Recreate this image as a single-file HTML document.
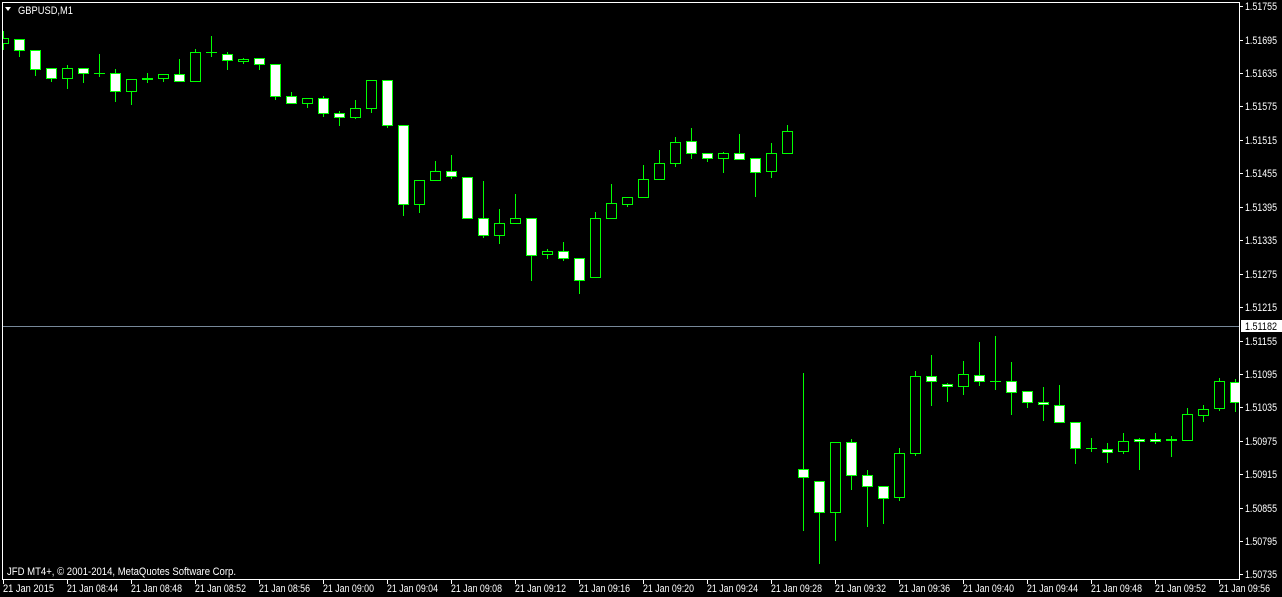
<!DOCTYPE html>
<html><head><meta charset="utf-8"><style>
html,body{margin:0;padding:0;background:#000;overflow:hidden}
svg{display:block}
text{font-family:"Liberation Sans",sans-serif;font-size:11px;fill:#fff}
.w{fill:#fff;stroke:#0f0}
.b{fill:#000;stroke:#0f0}
</style></head><body>
<svg width="1282" height="597" viewBox="0 0 1282 597" xmlns="http://www.w3.org/2000/svg">
<defs><clipPath id="c"><rect x="3" y="3" width="1236" height="576"/></clipPath></defs>
<rect width="1282" height="597" fill="#000"/>
<path d="M2.5 2.5H1239.5V579.5H2.5Z" fill="none" stroke="#fff"/>
<path d="M3 326.5H1239" stroke="#778899"/>
<g clip-path="url(#c)" stroke-width="1" id="g"></g>
<polygon points="5,7 11,7 8,11" fill="#fff"/>
<text x="18" y="14" textLength="55" lengthAdjust="spacingAndGlyphs">GBPUSD,M1</text>
<text x="7" y="575" textLength="229" lengthAdjust="spacingAndGlyphs">JFD MT4+, © 2001-2014, MetaQuotes Software Corp.</text>
<g id="ax"></g>
<rect x="1241" y="320" width="41" height="12" fill="#fff"/>
<text x="1245" y="330" textLength="32" lengthAdjust="spacingAndGlyphs" style="fill:#000">1.51182</text>
</svg>
<script>
var C=[[3,38,43,31,49,'b'],[19,39,50,39,56,'w'],[35,50,69,50,75,'w'],[51,68,78,68,81,'w'],[67,68,78,65,88,'b'],[83,68,73,68,82,'w'],[99,73,73,54,76,'d'],[115,73,91,69,101,'w'],[131,79,91,79,104,'b'],[147,78,79,73,82,'w'],[163,74,78,74,81,'b'],[179,74,81,59,81,'w'],[195,52,81,49,81,'b'],[211,52,52,36,56,'d'],[227,54,60,52,69,'w'],[243,59,61,58,63,'b'],[259,58,64,58,69,'w'],[275,64,96,64,99,'w'],[291,96,103,92,103,'w'],[307,98,103,98,107,'b'],[323,98,113,96,116,'w'],[339,113,117,111,125,'w'],[355,108,117,100,118,'b'],[371,80,108,80,112,'b'],[387,80,125,80,127,'w'],[403,125,204,125,215,'w'],[419,180,204,180,212,'b'],[435,171,180,161,180,'b'],[451,171,176,155,178,'w'],[467,177,218,177,218,'w'],[483,218,235,181,237,'w'],[499,223,235,209,243,'b'],[515,218,223,194,223,'b'],[531,218,255,218,280,'w'],[547,251,254,249,258,'b'],[563,251,258,242,260,'w'],[579,258,280,258,293,'w'],[595,218,277,212,277,'b'],[611,203,218,184,218,'b'],[627,197,204,197,206,'b'],[643,179,197,165,197,'b'],[659,163,179,150,179,'b'],[675,142,163,137,166,'b'],[691,141,153,128,158,'w'],[707,153,158,153,161,'w'],[723,153,158,152,172,'b'],[739,153,159,134,159,'w'],[755,158,172,158,196,'w'],[771,153,171,143,177,'b'],[787,131,153,125,153,'b'],[803,469,477,373,530,'w'],[819,481,512,481,563,'w'],[835,442,512,442,540,'b'],[851,442,475,439,489,'w'],[867,475,486,470,526,'w'],[883,486,498,486,523,'w'],[899,453,497,448,500,'b'],[915,376,453,371,455,'b'],[931,376,381,355,405,'w'],[947,384,386,383,401,'w'],[963,374,386,361,394,'b'],[979,375,381,342,385,'w'],[995,381,381,336,389,'d'],[1011,381,392,362,414,'w'],[1027,391,402,391,407,'w'],[1043,402,404,387,420,'w'],[1059,405,422,385,422,'w'],[1075,422,448,422,463,'w'],[1091,448,448,438,451,'d'],[1107,449,452,443,462,'w'],[1123,441,451,433,453,'b'],[1139,439,441,438,469,'w'],[1155,439,441,433,443,'w'],[1171,439,440,436,456,'w'],[1187,414,440,408,440,'b'],[1203,409,415,405,421,'b'],[1219,381,408,378,410,'b'],[1235,382,402,379,411,'w']];
var s='';
C.forEach(function(c){var x=c[0];
s+='<path d="M'+(x+.5)+' '+c[3]+'V'+(c[4]+1)+'" stroke="#0f0"/>';
if(c[5]=='d')s+='<path d="M'+(x-5)+' '+(c[1]+.5)+'H'+(x+6)+'" stroke="#0f0"/>';
else s+='<rect x="'+(x-4.5)+'" y="'+(c[1]+.5)+'" width="10" height="'+(c[2]-c[1])+'" class="'+c[5]+'"/>';});
document.getElementById('g').innerHTML=s;
var a='';
var P=['1.51755','1.51695','1.51635','1.51575','1.51515','1.51455','1.51395','1.51335','1.51275','1.51215','1.51155','1.51095','1.51035','1.50975','1.50915','1.50855','1.50795','1.50735'];
var Y=[6,40,73,106,140,173,207,240,274,307,341,374,407,441,474,508,541,574];
P.forEach(function(p,i){a+='<path d="M1240 '+(Y[i]+.5)+'H1243" stroke="#fff"/><text x="1245" y="'+(Y[i]+4)+'" textLength="32" lengthAdjust="spacingAndGlyphs">'+p+'</text>';});
var T=['21 Jan 2015'];for(var m=44;m<=116;m+=4){var h=8+Math.floor(m/60),mm=m%60;T.push('21 Jan '+('0'+h).slice(-2)+':'+('0'+mm).slice(-2));}
T.forEach(function(t,i){var x=3+64*i;a+='<path d="M'+(x+.5)+' 580V584" stroke="#fff"/><text x="'+x+'" y="592" textLength="51" lengthAdjust="spacingAndGlyphs">'+t+'</text>';});
document.getElementById('ax').innerHTML=a;
</script>
</body></html>
